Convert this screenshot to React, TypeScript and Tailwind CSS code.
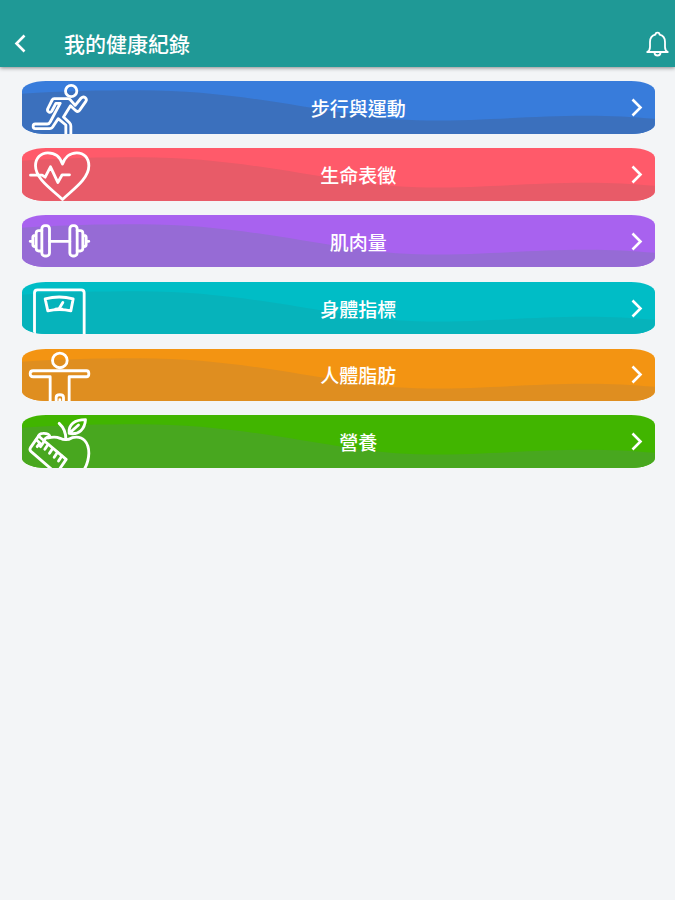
import type { ReactNode } from 'react';

type RecordItem = {
    title: string;
    bg: string;
    wave: string;
    viewBox: string;
    icon: ReactNode;
};

const records: RecordItem[] = [
    {
        title: "步行與運動",
        bg: "bg-[#387cdb]",
        wave: "text-[#3b70bd]",
        viewBox: "19.5 19 240 157.5",
        icon: (
            <>
                <circle cx="167" cy="49" r="17" />
                <path d="M116 72h40q7 0 10 5l13 15 18-22q6-6 12-1 6 5 2 11l-19 27q-5 6-11 1l-16-15-21 34 18 17q4 4 4 10v33h-15v-36l-23-19-15 23q-4 7-11 7H59q-6 0-6-7t6-7h36q6 0 9-6l30-56h-13l-12 23q-4 6-9 3-6-3-3-10l13-26q2-4 6-4z" />
            </>
        )
    },
    {
        title: "生命表徵",
        bg: "bg-[#ff5a6a]",
        wave: "text-[#e85b68]",
        viewBox: "19.5 18.6 240 157.5",
        icon: (
            <>
                <path d="M141 173C108 142 60 111 60 72c0-24 17-39 37-39 23 0 38 15 44 34 6-19 21-34 43-34 21 0 36 15 36 39 0 39-46 70-79 101z" />
                <path d="M45 100h35l9 6 16-31 22 47 13-23h22" />
            </>
        )
    },
    {
        title: "肌肉量",
        bg: "bg-[#a862ef]",
        wave: "text-[#966bd5]",
        viewBox: "19.5 18 240 157.5",
        icon: (
            <>
                <rect x="79" y="50" width="23" height="91" rx="9" />
                <rect x="163" y="50" width="22" height="91" rx="9" />
                <path d="M79 65H70q-8 0-8 8v45q0 8 8 8h9M185 65h9q8 0 8 8v45q0 8-8 8h-9M62 79h-4q-6 0-6 7v20q0 7 6 7h4M202 79h4q6 0 6 7v20q0 7-6 7h-4M44 97h8M212 97h8M102 97h61" />
            </>
        )
    },
    {
        title: "身體指標",
        bg: "bg-[#00bdc6]",
        wave: "text-[#06b3bb]",
        viewBox: "19.5 17.4 240 157.5",
        icon: (
            <>
                <path d="M57 190V50q0-9 9-9h131q9 0 9 9v140" />
                <path d="M89 68q42-11 84 0l-7 36q-34-7-69 0zM120 99l11-2 11-18M131 97l9 2" />
            </>
        )
    },
    {
        title: "人體脂肪",
        bg: "bg-[#f39412]",
        wave: "text-[#df8e20]",
        viewBox: "19.5 19.8 240 157.5",
        icon: (
            <>
                <circle cx="133" cy="54" r="22" />
                <path d="M104 190v-87H53q-9 0-9-9t9-9h160q7 0 7 9t-7 9h-52v87" />
                <path d="M122 190v-25q0-8 11-8t11 8v25M133 172v15" />
            </>
        )
    },
    {
        title: "營養",
        bg: "bg-[#41b500]",
        wave: "text-[#48a71f]",
        viewBox: "19.5 19 240 157.5",
        icon: (
            <>
                <path d="M151 93q1-30-20-49" />
                <path d="M161 74c-3-27 17-41 49-41-2 28-19 47-49 41l28-25" />
                <path d="M98 88q20-6 36 1 18 9 36-2c34-8 50 16 50 47q-1 28-15 50" />
                {/* Measuring tape */}
                <path d="M69 82L45 117q-4 7 2 12L112 185M69 82L152 152L131 183" />
                <path d="M69 82q3-8 13-8 18-1 21 9-17 4-17 15M62 93l11 10-8 11M86 98l-11 16M98 107l-10 15M112 119l-10 15M126 131l-10 15M139 142l-10 15" />
            </>
        )
    }
];

function Chevron({ left = false }: { left?: boolean }) {
    return (
        <svg
            className={left ? "h-[19px] w-3 shrink-0 rotate-180" : "h-[19px] w-3 shrink-0"}
            viewBox="0 0 12 19"
            fill="none"
            stroke="currentColor"
            strokeWidth="2.6"
        >
            <path d="M1.5 1.5L9.5 9.5L1.5 17.5" />
        </svg>
    );
}

function RecordCard({ item }: { item: RecordItem }) {
    return (
        <div className={`relative flex h-[52.5px] items-center overflow-hidden rounded-[24px/10px] text-white ${item.bg}`}>
            {/* Background wave */}
            <svg
                className={`absolute inset-0 h-full w-full ${item.wave}`}
                viewBox="0 0 633 52.5"
                preserveAspectRatio="none"
                fill="currentColor"
            >
                <path d="M0 12.7C40 10 80 9.3 117 9.3C240 9.5 320 39.5 405 39.5C470 39.5 510 34.7 565 34.7C590 34.7 610 36 633 37.7V53H0Z" />
            </svg>

            <svg
                className="relative h-[52.5px] w-20 shrink-0"
                viewBox={item.viewBox}
                fill="none"
                stroke="currentColor"
                strokeWidth="8.5"
                strokeLinecap="round"
                strokeLinejoin="round"
            >
                {item.icon}
            </svg>
            <span className="relative flex-1 pt-px text-center text-[19px] leading-7 font-medium">{item.title}</span>
            <div className="relative flex w-10 shrink-0 pl-4">
                <Chevron />
            </div>
        </div>
    );
}

export default function App() {
    return (
        <div className="min-h-screen bg-[#f3f5f7] font-['Noto_Sans_CJK_TC',sans-serif]">
            {/* App bar */}
            <header className="flex h-[67px] items-end bg-[#1f9996] pr-[6px] pb-[10px] pl-[14px] text-white shadow-[0_1px_4px_rgba(0,0,0,0.45)]">
                <div className="flex h-7 items-center">
                    <Chevron left />
                </div>
                <h1 className="ml-[38px] flex-1 text-[21px] leading-7 font-medium">我的健康紀錄</h1>
                <svg className="h-7 w-[23px]" viewBox="0 0 23 28" fill="none" stroke="currentColor" strokeWidth="1.8" strokeLinejoin="round">
                    <path d="M1.2 23h20.6q-2.8-1.5-2.8-5v-5q0-6-5.4-7.3a2.1 2.1 0 0 0-4.2 0Q4 7 4 13v5q0 3.5-2.8 5z" />
                    <path d="M8.5 23.500a3 3 0 0 0 6 0" />
                </svg>
            </header>

            <main className="flex flex-col gap-[14.3px] pt-[14.4px] pr-[20.5px] pl-[21.8px]">
                {records.map((item) => (
                    <RecordCard key={item.title} item={item} />
                ))}
            </main>
        </div>
    );
}
